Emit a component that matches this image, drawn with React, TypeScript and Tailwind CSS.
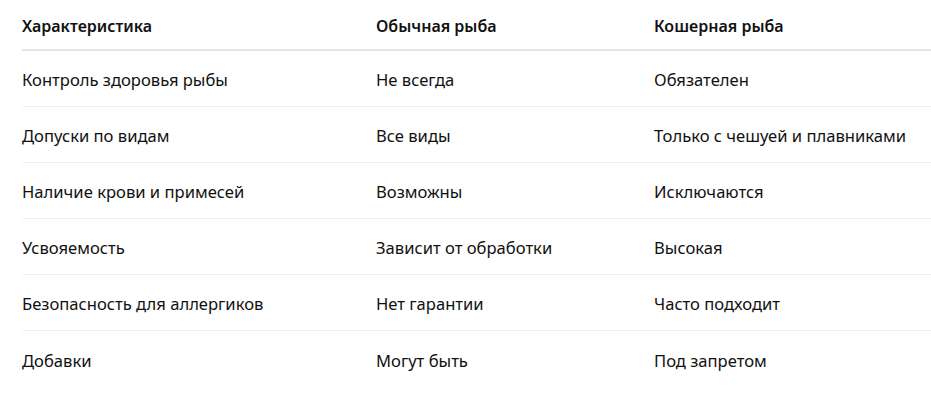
import React from "react";

const rows: [string, string, string][] = [
  ["Контроль здоровья рыбы", "Не всегда", "Обязателен"],
  ["Допуски по видам", "Все виды", "Только с чешуей и плавниками"],
  ["Наличие крови и примесей", "Возможны", "Исключаются"],
  ["Усвояемость", "Зависит от обработки", "Высокая"],
  ["Безопасность для аллергиков", "Нет гарантии", "Часто подходит"],
  ["Добавки", "Могут быть", "Под запретом"],
];

export default function App() {
  return (
    <div className="bg-white w-[931px] h-[403px] pl-[22px] text-[#111111] font-['Noto_Sans',sans-serif]">
      <div className="grid grid-cols-[354px_278px_1fr] h-[51px] items-center border-b-2 border-[#e6e6e6] font-semibold text-[16px] pt-[2px]">
        <div>Характеристика</div>
        <div>Обычная рыба</div>
        <div>Кошерная рыба</div>
      </div>
      {rows.map((r, i) => (
        <div
          key={i}
          className={`grid grid-cols-[354px_278px_1fr] h-[56px] items-center text-[16.6px] pt-[4px] ${
            i < rows.length - 1 ? "border-b border-[#f0f0f0]" : ""
          }`}
        >
          <div>{r[0]}</div>
          <div>{r[1]}</div>
          <div>{r[2]}</div>
        </div>
      ))}
    </div>
  );
}
